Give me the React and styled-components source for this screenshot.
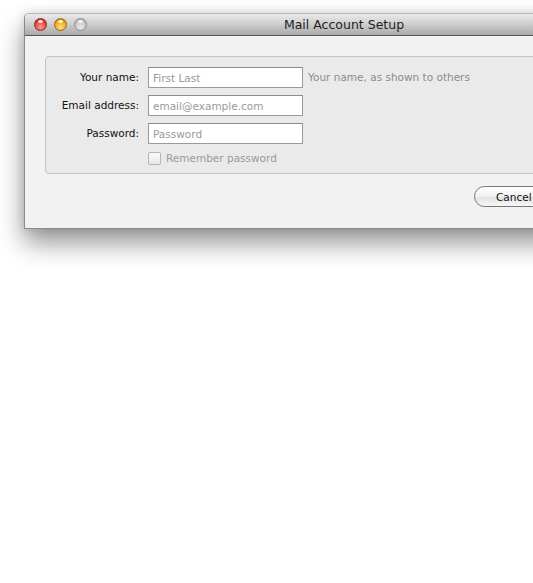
import React from 'react'
import styled, { createGlobalStyle } from 'styled-components'

const Global = createGlobalStyle`
    html, body {
        margin: 0;
        padding: 0;
        background: #ffffff;
        overflow: hidden;
    }
    body {
        font-family: "DejaVu Sans", "Liberation Sans", sans-serif;
    }
`

const Page = styled.div`
    width: 533px;
    height: 583px;
    overflow: hidden;
    padding: 13px 0 0 24px;
    box-sizing: border-box;
`

const Window = styled.div`
    width: 640px;
    background: #f2f2f2;
    border: 1px solid #8a8a8a;
    border-top-color: #b8b8b8;
    border-radius: 5px 5px 0 0;
    box-shadow: 0 14px 26px rgba(0, 0, 0, 0.42), 0 0 10px rgba(0, 0, 0, 0.12);
`

const TitleBar = styled.div`
    position: relative;
    height: 21px;
    display: flex;
    align-items: center;
    justify-content: center;
    background: linear-gradient(#eaeaea, #d0d0d0 45%, #a9a9a9);
    border-bottom: 1px solid #575757;
    border-radius: 5px 5px 0 0;
    font-size: 12.5px;
    color: #1e1e1e;
`

const Lights = styled.div`
    position: absolute;
    left: 9px;
    top: 4px;
    display: flex;
    gap: 7px;
`

const Light = styled.span`
    width: 13px;
    height: 13px;
    border-radius: 50%;
    box-sizing: border-box;
    border: 1px solid ${p => p.$edge};
    background: radial-gradient(circle at 50% 75%, ${p => p.$glow} 0%, ${p => p.$base} 60%, ${p => p.$dark} 100%);
    position: relative;

    &::after {
        content: '';
        position: absolute;
        left: 3px;
        top: 1px;
        width: 5px;
        height: 3px;
        border-radius: 50%;
        background: rgba(255, 255, 255, 0.85);
    }
`

const Body = styled.div`
    padding: 20px 0 21px 20px;
`

const Group = styled.div`
    background: #eaeaea;
    border: 1px solid #c3c3c3;
    border-radius: 4px;
    padding: 10px 0 8px 0;
    display: grid;
    grid-template-columns: 93px 155px auto;
    grid-template-rows: 21px 21px 21px 14px;
    column-gap: 10px;
    row-gap: 7px;
    align-items: center;
`

const Label = styled.label`
    font-size: 10.5px;
    line-height: 13px;
    color: #111;
    text-align: right;
    white-space: nowrap;
`

const Input = styled.input`
    box-sizing: border-box;
    width: 155px;
    height: 21px;
    border: 1px solid #9a9a9a;
    border-top-color: #8a8a8a;
    background: #fff;
    font-family: inherit;
    font-size: 10.5px;
    padding: 1px 4px 0;
    outline: none;
    color: #333;
    margin-left: -1px;

    &::placeholder {
        color: #9a9a9a;
    }
`

const Hint = styled.span`
    font-size: 10.5px;
    line-height: 13px;
    color: #8c8c8c;
    margin-left: -6px;
    white-space: nowrap;
`

const CheckRow = styled.div`
    grid-column: 2 / 4;
    display: flex;
    align-items: center;
    gap: 5px;
    font-size: 10.5px;
    line-height: 13px;
    color: #9a9a9a;
    margin-left: -1px;
`

const Box = styled.span`
    width: 13px;
    height: 13px;
    box-sizing: border-box;
    border: 1px solid #b4b4b4;
    border-radius: 2px;
    background: linear-gradient(#fafafa, #e8e8e8);
`

const Footer = styled.div`
    display: flex;
    padding: 12px 0 0 429px;
`

const Button = styled.button`
    height: 21px;
    width: 110px;
    border: 1px solid #777;
    border-radius: 11px;
    background: linear-gradient(#ffffff, #f0f0f0 50%, #e2e2e2 51%, #f6f6f6);
    font-family: inherit;
    font-size: 10.5px;
    color: #111;
    text-align: left;
    padding: 0 0 0 21px;
`

const App = function () {
    return (
        <Page>
            <Global />
            <Window>
                <TitleBar>
                    <Lights>
                        <Light $base="#e0443a" $glow="#ff9a8a" $dark="#a01810" $edge="#8c2a22" />
                        <Light $base="#f0a418" $glow="#ffe27a" $dark="#b86a00" $edge="#9a6a1a" />
                        <Light $base="#c4c4c4" $glow="#ececec" $dark="#9c9c9c" $edge="#8e8e8e" />
                    </Lights>
                    <span style={{ marginLeft: -2 }}>Mail Account Setup</span>
                </TitleBar>
                <Body>
                    <Group>
                        <Label>Your name:</Label>
                        <Input placeholder="First Last" />
                        <Hint>Your name, as shown to others</Hint>

                        <Label>Email address:</Label>
                        <Input placeholder="email@example.com" />
                        <span />

                        <Label>Password:</Label>
                        <Input placeholder="Password" type="password" />
                        <span />

                        <CheckRow>
                            <Box />
                            Remember password
                        </CheckRow>
                    </Group>
                    <Footer>
                        <Button>Cancel</Button>
                    </Footer>
                </Body>
            </Window>
        </Page>
    )
}

export default App
